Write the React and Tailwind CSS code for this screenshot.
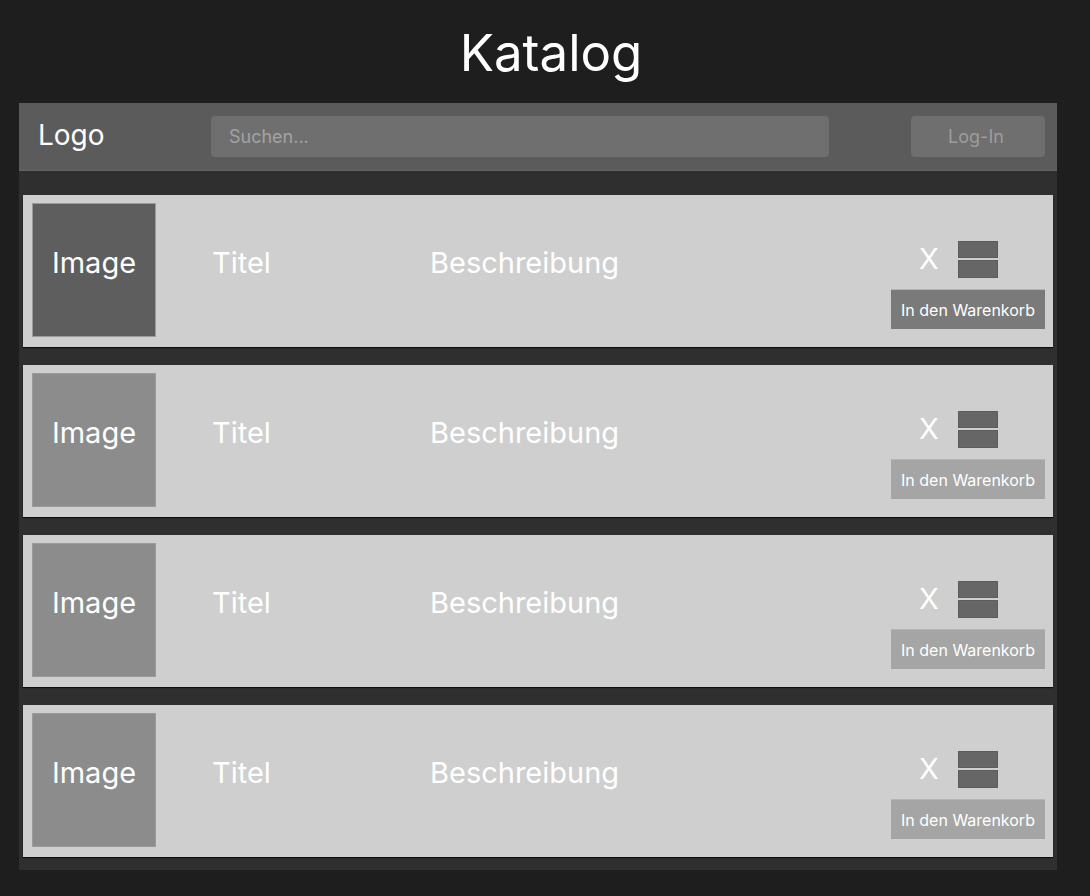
import React from "react";

const ITEMS = [
  { id: 1, active: true },
  { id: 2, active: false },
  { id: 3, active: false },
  { id: 4, active: false },
];

export default function App() {
  return (
    <div
      className="min-h-screen bg-[#1e1e1e] text-white"
      style={{ fontFamily: "Inter, 'Noto Sans', sans-serif" }}
    >
      {/* Heading */}
      <h1 className="pt-[28px] pl-[12px] text-center text-[51px] font-normal leading-[50px] text-white">
        Katalog
      </h1>

      {/* Main panel */}
      <div className="ml-[19px] mt-[25px] w-[1038px] bg-[#2f2f2f] pb-[13px]">
        {/* Top bar */}
        <div className="flex h-[68px] items-center border-b border-[#636363] bg-[#5b5b5b]">
          <div className="w-[192px] pl-[19px] pb-[4px] text-[28px] leading-[34px] text-white">Logo</div>
          <input
            type="text"
            placeholder="Suchen..."
            className="h-[41px] w-[618px] rounded-[4px] bg-[#6f6f6f] px-[18px] text-[18px] text-white outline-none placeholder:text-[#a3a3a3]"
          />
          <button className="ml-auto mr-[12px] h-[41px] w-[134px] rounded-[4px] bg-[#6f6f6f] pr-[4px] text-[18px] text-[#9d9d9d]">
            Log-In
          </button>
        </div>

        {/* Product list */}
        <div className="flex flex-col gap-[18px] px-[4px] pt-[24px]">
          {ITEMS.map((item) => (
            <ProductRow key={item.id} active={item.active} />
          ))}
        </div>
      </div>
    </div>
  );
}

function ProductRow({ active }) {
  return (
    <div className="flex h-[152px] bg-[#cfcfcf] shadow-[0_1px_1px_rgba(0,0,0,0.7)]">
      {/* Image placeholder */}
      <div
        className={`ml-[9px] mt-[8px] flex h-[134px] w-[124px] shrink-0 items-center justify-center border border-[#9b9b9b] pb-[14px] text-[29px] leading-[34px] text-white ${
          active ? "bg-[#5e5e5e]" : "bg-[#8c8c8c]"
        }`}
      >
        Image
      </div>

      <div className="ml-[56px] mt-[51px] w-[218px] text-[29px] leading-[34px] text-white">Titel</div>
      <div className="mt-[51px] text-[29px] leading-[34px] text-white">Beschreibung</div>

      {/* Quantity + cart */}
      <div className="ml-auto mr-[8px] flex w-[154px] flex-col">
        <div className="mt-[46px] flex h-[37px] items-start">
          <span className="ml-[28px] mt-[1px] text-[29px] leading-[34px] text-white">X</span>
          <div className="ml-[19px] flex w-[40px] flex-col gap-[2px]">
            <div className="h-[17px] border border-[#5c5c5c] bg-[#666666]" />
            <div className="h-[18px] border border-[#5c5c5c] bg-[#666666]" />
          </div>
        </div>
        <button
          className={`mt-[11px] h-[40px] w-[154px] border-t border-[#b5b5b5] text-[16px] text-white ${
            active ? "bg-[#7a7a7a]" : "bg-[#a5a5a5]"
          }`}
        >
          In den Warenkorb
        </button>
      </div>
    </div>
  );
}
